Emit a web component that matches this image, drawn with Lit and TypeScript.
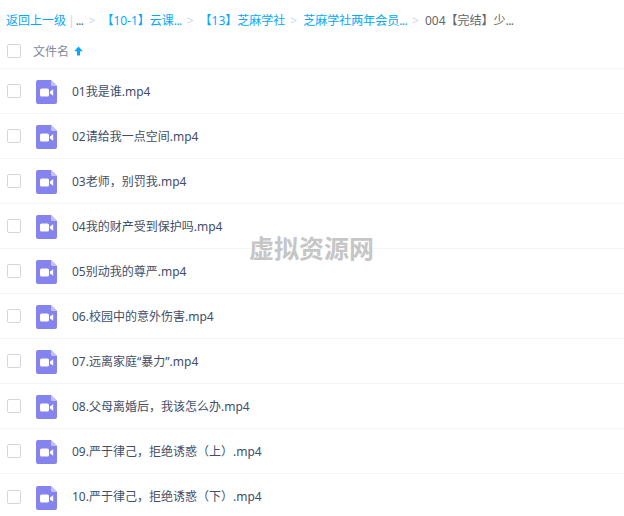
import { LitElement, html, css, svg } from "lit";
import { customElement } from "lit/decorators.js";

const FILES = [
  "01我是谁.mp4",
  "02请给我一点空间.mp4",
  "03老师，别罚我.mp4",
  "04我的财产受到保护吗.mp4",
  "05别动我的尊严.mp4",
  "06.校园中的意外伤害.mp4",
  "07.远离家庭“暴力”.mp4",
  "08.父母离婚后，我该怎么办.mp4",
  "09.严于律己，拒绝诱惑（上）.mp4",
  "10.严于律己，拒绝诱惑（下）.mp4",
];

const icon = svg`<svg class="icon" width="21" height="24" viewBox="0 0 21 24">
  <path d="M2 0H15L21 6V22a2 2 0 0 1-2 2H2a2 2 0 0 1-2-2V2a2 2 0 0 1 2-2Z" fill="#8583ee"/>
  <path d="M15 0L21 6H16.5a1.5 1.5 0 0 1-1.5-1.5Z" fill="#c3c2f7"/>
  <rect x="4" y="8.5" width="9" height="8" rx="1.6" fill="#fff"/>
  <path d="M14 11.4L17.2 9.2V15.8L14 13.6Z" fill="#fff"/>
</svg>`;

@customElement("app-root")
export class AppRoot extends LitElement {
  static styles = css`
    :host {
      display: block;
      width: 624px;
      height: 516px;
      overflow: hidden;
      background: #fff;
      position: relative;
      font-family: "Noto Sans", "Noto Sans CJK SC", sans-serif;
      font-size: 12px;
      line-height: 16px;
      color: #424e67;
    }
    .crumbs {
      display: flex;
      align-items: center;
      box-sizing: border-box;
      height: 40px;
      padding: 2px 0 0 6px;
      white-space: nowrap;
      color: #06a7ff;
    }
    .bar { color: #c4d8f4; margin: 0 1px 0 2px; }
    .dots { color: #666; }
    .el { letter-spacing: -0.6px; }
    .sep { color: #c4d8f4; margin: 0 6px 0 5px; }
    .cur { color: #666; }
    .header {
      display: flex;
      align-items: center;
      height: 29px;
      box-sizing: border-box;
      padding: 0 0 7px 7px;
      border-bottom: 1px solid #f2f4f9;
      color: #818999;
    }
    .box {
      width: 12px;
      height: 12px;
      border: 1px solid #d4d7de;
      border-radius: 2px;
      flex: none;
    }
    .title { margin: 2px 0 0 12px; }
    .arrow { margin-left: 5px; }
    .row {
      display: flex;
      align-items: center;
      height: 45px;
      box-sizing: border-box;
      padding-left: 7px;
      border-bottom: 1px solid #f2f4f9;
    }
    .row:last-child { border-bottom: 0; }
    .icon { margin: 2px 0 0 15px; flex: none; }
    .name { margin: 1px 0 0 15px; }
    .mark {
      position: absolute;
      left: 249px;
      top: 235px;
      font-size: 25px;
      line-height: 26px;
      font-weight: 700;
      color: #c6c6c6;
      background: rgba(255, 255, 255, 0.35);
    }
  `;

  render() {
    return html`
      <div class="crumbs">
        <span>返回上一级</span><span class="bar">|</span><span class="dots el">...</span>
        <span class="sep">&gt;</span><span>【10-1】云课<span class="el">...</span></span>
        <span class="sep">&gt;</span><span>【13】芝麻学社</span>
        <span class="sep">&gt;</span><span>芝麻学社两年会员<span class="el">...</span></span>
        <span class="sep">&gt;</span><span class="cur">004【完结】少<span class="el">...</span></span>
      </div>
      <div class="header">
        <span class="box"></span>
        <span class="title">文件名</span>
        <svg class="arrow" width="9" height="10" viewBox="0 0 9 10">
          <path d="M4.5 0.5L8.8 5.2H6V9.5H3V5.2H0.2Z" fill="#06a7ff"/>
        </svg>
      </div>
      <div>
        ${FILES.map(
          (f) => html`<div class="row">
            <span class="box"></span>${icon}<span class="name">${f}</span>
          </div>`
        )}
      </div>
      <div class="mark">虚拟资源网</div>
    `;
  }
}
